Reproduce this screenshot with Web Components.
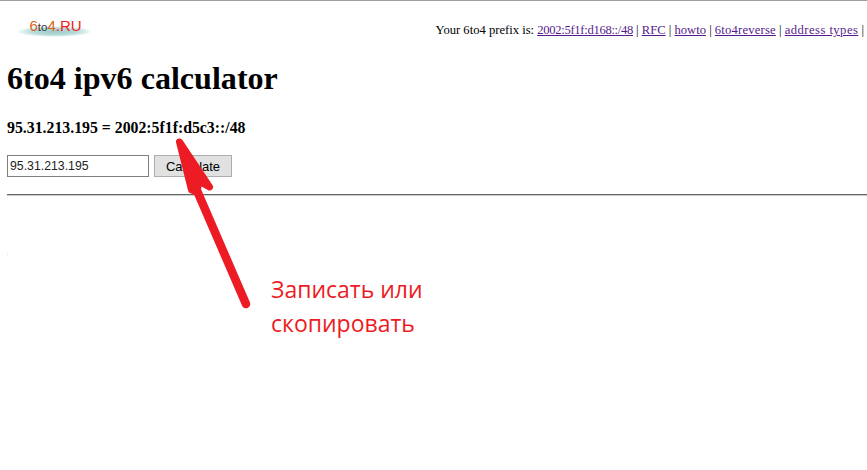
<!DOCTYPE html>
<html>
<head>
<meta charset="utf-8">
<title>6to4 ipv6 calculator</title>
<style>
html,body{margin:0;padding:0;background:#fff}
body{height:470px;overflow:hidden;font-family:"Liberation Serif",serif;color:#000;position:relative}
</style>
</head>
<body>
<site-header></site-header>
<calc-panel ip="95.31.213.195" result="2002:5f1f:d5c3::/48"></calc-panel>
<copy-hint></copy-hint>

<script>
// top strip: logo on the left, links on the right
class siteLogo extends HTMLElement{
	constructor(){ super();
		this.attachShadow({mode:"open"}).innerHTML = `
		<style>
		:host{display:block;width:75px;height:19px;position:relative;
			font:15px/14px "Liberation Sans",sans-serif}
		.glow{position:absolute;left:0;right:0;top:6px;height:11px;border-radius:50%;
			background:radial-gradient(ellipse closest-side,#9cc9c8 0,#b5dad9 60%,#e4f2f1 88%,#fff 100%)}
		.txt{position:relative;display:block;text-align:center;padding-left:2px;white-space:nowrap;margin-top:-1px}
		.o{color:#d8641a}.s{color:#333;font-size:11.5px}.r{color:#ee1c1c}
		</style>
		<div class="glow"></div>
		<span class="txt"><span class="o">6</span><span class="s">to</span><span class="o">4</span><span class="r">.RU</span></span>`;
	}
}
customElements.define("site-logo",siteLogo);

class siteHeader extends HTMLElement{
	constructor(){ super();
		this.attachShadow({mode:"open"}).innerHTML = `
		<style>
		:host{display:flex;justify-content:space-between;align-items:flex-start;
			border-top:1px solid #a0a0a0;padding:19px 3px 0 17px;font-size:12.62px;line-height:14px}
		.links{margin-top:3px;white-space:nowrap}
		a{color:#551a8b}
		.tight{letter-spacing:-.31px}
		.wide{letter-spacing:.2px}
		.wider{letter-spacing:.46px}
		</style>
		<site-logo></site-logo>
		<div class="links">Your 6to4 prefix is: <a class="tight" href="#a">2002:5f1f:d168::/48</a> | <a href="#b">RFC</a> | <a href="#c">howto</a> | <a class="wide" href="#d">6to4reverse</a> | <a class="wider" href="#e">address types</a> |</div>`;
	}
}
customElements.define("site-header",siteHeader);

// heading, result line and the form
class calcPanel extends HTMLElement{
	constructor(){ super();
		const ip = this.getAttribute("ip"), res = this.getAttribute("result");
		this.attachShadow({mode:"open"}).innerHTML = `
		<style>
		:host{display:block;padding:0 0 0 7px}
		h1{font-size:32.1px;line-height:37px;margin:21px 0 0}
		.res{font-size:15.8px;line-height:18px;font-weight:bold;margin:22px 0 0}
		form{display:flex;gap:5px;margin:18px 0 0;align-items:center}
		input{box-sizing:border-box;width:142px;height:22px;padding:0 2px;margin:0;
			border:1px solid #7f7f7f;font:12.3px "Liberation Sans",sans-serif;color:#222;background:#fff;border-radius:0;outline:0}
		button{box-sizing:border-box;width:78px;height:22px;padding:0;margin:0;
			border:1px solid #adadad;background:#e1e1e1;font:13px "Liberation Sans",sans-serif;color:#000;border-radius:0}
		hr{height:0;border:0;border-top:1px solid #666;border-bottom:1px solid #ccc;margin:17px 0 0}
		</style>
		<h1>6to4 ipv6 calculator</h1>
		<div class="res">${ip} = ${res}</div>
		<form onsubmit="return false"><input value="${ip}"><button type="button">Calculate</button></form>
		<hr>`;
	}
}
customElements.define("calc-panel",calcPanel);

// red arrow and note painted over the page
class copyHint extends HTMLElement{
	constructor(){ super();
		this.attachShadow({mode:"open"}).innerHTML = `
		<style>
		:host{display:block}
		svg{position:absolute;left:0;top:0;width:867px;height:470px;pointer-events:none}
		p{position:absolute;left:271px;top:272px;margin:0;width:180px;
			font:23px/34px "Open Sans",sans-serif;color:#ed1c24}
		</style>
		<svg viewBox="0 0 867 470">
			<path d="M179.5 142 L209.5 187 L199 181 L197 192 L191.5 190 Z" fill="#ed1c24" stroke="#ed1c24" stroke-width="7" stroke-linejoin="round"/>
			<path d="M195 186 L246 304" fill="none" stroke="#ed1c24" stroke-width="8.5" stroke-linecap="round"/>
			<rect x="7" y="254" width="1" height="1" fill="#ddd"/>
		</svg>
		<p>Записать или<br>скопировать</p>`;
	}
}
customElements.define("copy-hint",copyHint);
</script>
</body>
</html>
